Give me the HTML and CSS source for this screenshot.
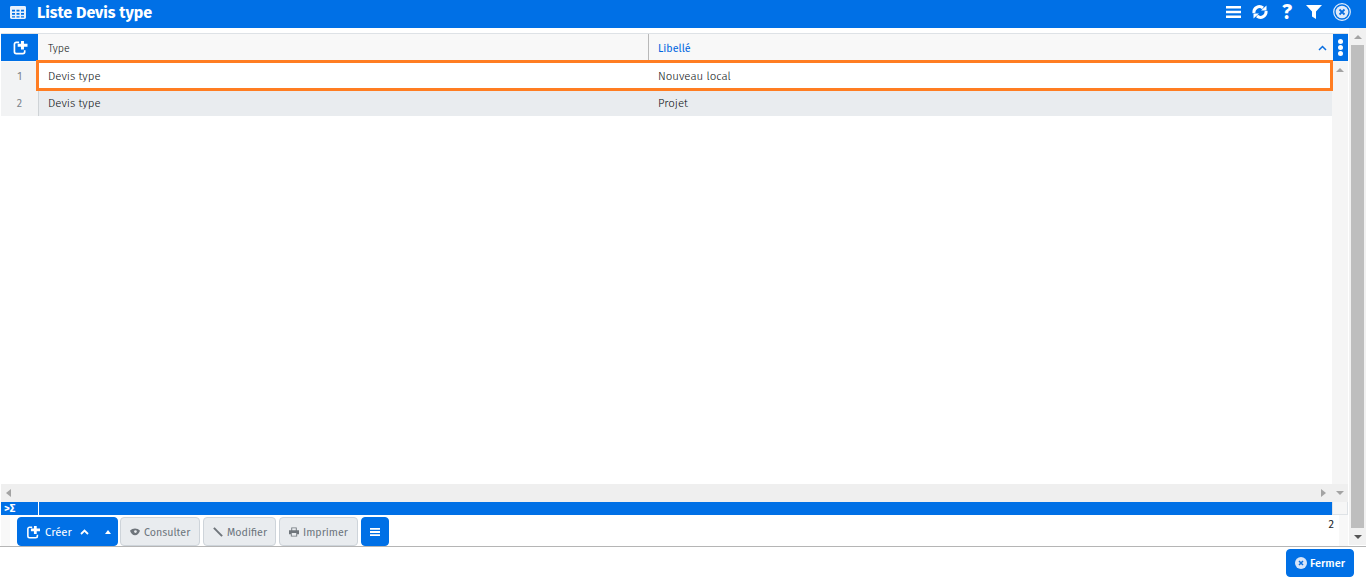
FILE: index.html
```html
<!DOCTYPE html>
<html lang="fr">
<head>
<meta charset="utf-8">
<title>Liste Devis type</title>
<link rel="stylesheet" href="styles.css">
</head>
<body>
<div class="app">
  <header class="topbar">
    <svg class="ico-table" width="16" height="13" viewBox="0 0 16 14" preserveAspectRatio="none"><path fill="#e6f0fc" fill-rule="evenodd" d="M1.500 0h13A1.500 1.500 0 0 1 16 1.500v11a1.500 1.500 0 0 1-1.500 1.500h-13A1.500 1.500 0 0 1 0 12.500v-11A1.500 1.500 0 0 1 1.500 0zM2 4v2h3V4zm4.500 0v2h3V4zM11 4v2h3V4zM2 7.500v2h3v-2zm4.500 0v2h3v-2zm4.500 0v2h3v-2zM2 11v1.500h3V11zm4.500 0v1.500h3V11zm4.500 0v1.500h3V11z"/></svg>
    <h1 class="title">Liste Devis type</h1>
    <div class="top-icons">
      <svg width="15" height="12" viewBox="0 0 15 12"><path fill="#fff" d="M0 0h15v2.600H0zM0 4.700h15v2.600H0zM0 9.400h15V12H0z"/></svg>
      <svg width="16" height="14" viewBox="0 0 16 14"><path fill="none" stroke="#fff" stroke-width="3" d="M2 8a5.500 5.500 0 0 1 9-5M14 6a5.500 5.500 0 0 1-9 5"/><path fill="#fff" d="M9 5.500 14.500 0.500V5.500zM7 8.500 1.500 13.500V8.500z"/></svg>
      <span class="help">?</span>
      <svg width="16" height="14" viewBox="0 0 16 14"><path fill="#fff" d="M0 0h16L10 6.500V14L6 11.500V6.500z"/></svg>
      <svg width="18" height="18" viewBox="0 0 18 18"><circle cx="9" cy="9" r="8.300" fill="none" stroke="#e3eefb" stroke-width="1.200"/><circle cx="9" cy="9" r="6.300" fill="#dfeafa"/><path stroke="#0b6fe0" stroke-width="1.800" d="M6.500 6.500l5 5M11.500 6.500l-5 5"/></svg>
    </div>
  </header>
  <main class="content">
    <div class="panel">
      <div class="grid">
        <div class="grid-head">
          <div class="add-cell">
            <svg width="15" height="14" viewBox="0 0 15 15"><path fill="none" stroke="#fff" stroke-width="1.800" d="M6 1.500H3A2 2 0 0 0 1 3.500v8a2 2 0 0 0 2 2h7a2 2 0 0 0 2-2V10"/><path fill="#fff" d="M8 0h3.200v3H15v3.200h-3.800v3H8v-3H4.500V3H8z"/></svg>
          </div>
          <div class="col col-type">Type</div>
          <div class="col col-label"><span>Libellé</span>
            <svg class="sort" width="9" height="6" viewBox="0 0 9 6"><path fill="none" stroke="#0b6fe0" stroke-width="1.500" d="M1 5l3.500-3.500L8 5"/></svg>
          </div>
          <div class="menu-cell"><i></i><i></i><i></i></div>
        </div>
        <div class="grid-body">
          <div class="rows">
            <div class="row">
              <div class="num">1</div>
              <div class="row-sel"><div class="c c-type">Devis type</div><div class="c">Nouveau local</div></div>
            </div>
            <div class="row row-alt">
              <div class="num">2</div>
              <div class="c c-type">Devis type</div><div class="c">Projet</div>
            </div>
          </div>
          <div class="vbar inner"><b class="up"></b></div>
        </div>
        <div class="hbar">
          <b class="left"></b>
          <span class="spacer"></span>
          <b class="right"></b>
          <b class="down"></b>
        </div>
        <div class="sumbar">
          <div class="sum-ico">&gt;Σ</div>
          <div class="sum-fill"></div>
          <div class="sum-end"></div>
        </div>
      </div>
      <div class="toolbar">
        <div class="btn primary create">
          <svg width="13" height="13" viewBox="0 0 15 15"><path fill="none" stroke="#fff" stroke-width="1.800" d="M6 1.500H3A2 2 0 0 0 1 3.500v8a2 2 0 0 0 2 2h7a2 2 0 0 0 2-2V10"/><path fill="#fff" d="M8 0h3.200v3H15v3.200h-3.800v3H8v-3H4.500V3H8z"/></svg>
          <span>Créer</span>
          <svg class="chev" width="9" height="6" viewBox="0 0 9 6"><path fill="none" stroke="#fff" stroke-width="1.800" d="M1 5l3.500-3.500L8 5"/></svg>
          <b class="caret"></b>
        </div>
        <div class="btn b-view">
          <svg width="10" height="8" viewBox="0 0 11 8"><path fill="#6f757b" d="M0 2.500C3 -.5 8 -.5 11 2.500 10 5.500 8 7.500 5.500 7.500S1 5.500 0 2.500z"/><circle cx="6" cy="3.500" r="1.500" fill="#e8ebee"/></svg>
          <span>Consulter</span>
        </div>
        <div class="btn b-edit">
          <svg width="10" height="10" viewBox="0 0 11 11"><path fill="none" stroke="#6f757b" stroke-width="2.200" d="M1 1l9 9"/></svg>
          <span>Modifier</span>
        </div>
        <div class="btn b-print">
          <svg width="10" height="10" viewBox="0 0 11 10"><path fill="#6f757b" fill-rule="evenodd" d="M2.500 0h6v3H11v4.500H9V10H2V7.500H0V3h2.500zM3.500 1v2h4V1zM3 6v3h5V6z"/></svg>
          <span>Imprimer</span>
        </div>
        <div class="btn primary square">
          <svg width="10" height="8" viewBox="0 0 10 8"><path fill="#fff" d="M0 0h10v1.800H0zM0 3.100h10v1.800H0zM0 6.200h10V8H0z"/></svg>
        </div>
        <div class="count">2</div>
      </div>
    </div>
    <div class="vbar outer"><b class="up"></b><div class="thumb"></div><b class="down dark"></b></div>
  </main>
  <footer class="footer">
    <div class="btn primary close">
      <svg width="12" height="12" viewBox="0 0 12 12"><circle cx="6" cy="6" r="6" fill="#d7e5f9"/><path stroke="#0b6fe0" stroke-width="1.500" d="M4 4l4 4M8 4l-4 4"/></svg>
      <span>Fermer</span>
    </div>
  </footer>
</div>
</body>
</html>
```

FILE: styles.css
```css
* { box-sizing: border-box; }
html, body { margin: 0; padding: 0; height: 100%; background: #fff; overflow: hidden; }
body { font-family: "Fira Sans", "Noto Sans", Roboto, sans-serif; font-size: 11.500px; font-weight: 300; color: #0c0f12; }
.app { display: flex; flex-direction: column; width: 1366px; height: 580px; }

.topbar { height: 28px; flex: none; background: #0070e6; display: flex; align-items: center; color: #fff; padding: 0 15px 4px 10px; }
.ico-table { margin-right: 11px; }
.title { margin: 0; font-size: 16px; font-weight: 700; }
.top-icons { margin-left: auto; display: flex; align-items: center; gap: 11px; }
.help { font-size: 21px; font-weight: 700; line-height: 18px; width: 16px; text-align: center; }

.content { flex: none; height: 519px; display: flex; border-bottom: 1px solid #b5b5b5; }
.panel { width: 1349px; padding: 5px 1px 0; display: flex; flex-direction: column; }
.grid { height: 482px; flex: none; display: flex; flex-direction: column; border-top: 1px solid #dee2e6; }
.grid-head { height: 28px; flex: none; display: flex; background: #f8f8f8; }
.add-cell { width: 37px; height: 27px; padding-left: 1px; background: #0070e6; display: flex; align-items: center; justify-content: center; }
.col { display: flex; align-items: center; padding: 1px 9px 0 10px; border-right: 1px solid #b9b9b9; font-size: 10.700px; }
.col-type { width: 611px; color: #0c0f12; }
.col-label { flex: 1; border-right: 0; color: #0066e0; font-weight: 400; justify-content: space-between; padding: 1px 6px 0 9px; }
.sort { margin-bottom: 2px; }
.menu-cell { width: 15px; height: 27px; background: #0070e6; display: flex; flex-direction: column; align-items: center; justify-content: center; gap: 1px; }
.menu-cell i { width: 5px; height: 5px; background: #fff; border-radius: 50%; }

.grid-body { flex: 1; display: flex; min-height: 0; }
.rows { flex: 1; min-width: 0; }
.row { display: flex; align-items: stretch; height: 29px; }
.row-alt { height: 25px; padding-bottom: 1px; background: #e9ecef; }
.num { width: 38px; flex: none; background: #f2f3f4; color: #7d858c; display: flex; align-items: center; justify-content: center; border-right: 1px solid #cfd3d6; font-size: 10.700px; font-weight: 400; }
.row-alt .num { margin-bottom: -1px; }
.row-sel { flex: 1; display: flex; height: 31px; margin: -2px -1px 0 -3px; border: 3px solid #ff7d22; position: relative; background: #fff; }
.c { display: flex; align-items: center; padding-left: 9px; }
.c-type { width: 610px; flex: none; }

.vbar { flex: none; display: flex; flex-direction: column; align-items: center; }
.vbar.inner { width: 16px; padding-top: 6px; background: #f5f5f5; }
.vbar.outer { width: 17px; height: 517px; padding: 7px 2px 6px 2px; background: #f1f1f1; }
.vbar .thumb { width: 13px; flex: 1; background: #bebebe; margin: 6px 0 7px; }
b.up, b.down, b.left, b.right, b.caret { display: block; width: 0; height: 0; border-style: solid; border-color: transparent; flex: none; }
b.up { border-width: 0 4px 4px; border-bottom-color: #a3a3a3; }
b.down { border-width: 4px 4px 0; border-top-color: #a3a3a3; }
b.down.dark { border-top-color: #555; }
b.left { border-width: 4px 5px 4px 0; border-right-color: #a3a3a3; }
b.right { border-width: 4px 0 4px 5px; border-left-color: #a3a3a3; }

.hbar { height: 18px; flex: none; display: flex; align-items: center; background: #efefef; padding: 0 4px 0 5px; }
.hbar .spacer { flex: 1; }
.hbar .right { margin-right: 10px; }
.sumbar { height: 13px; flex: none; display: flex; }
.sum-ico { width: 38px; background: #0070e6; color: #fff; font-size: 11px; font-weight: 700; line-height: 13px; padding-left: 3px; border-right: 1px solid #fff; }
.sum-fill { flex: 1; background: #0070e6; }
.sum-end { width: 16px; background: #f6f6f6; border: 1px solid #dee2e6; border-top: 0; }

.toolbar { flex: 1; display: flex; align-items: flex-start; gap: 3px; padding: 2px 0 0 7px; position: relative; background: #fff; border-left: 9px solid #f8f8f8; border-right: 9px solid #f8f8f8; }
.btn { height: 29px; padding: 1px 0 0 9px; display: flex; align-items: center; gap: 4px; flex: none; border-radius: 4px; background: #e9ecef; border: 1px solid #ced4da; color: #6c757d; font-size: 10.700px; font-weight: 400; white-space: nowrap; }
.btn.primary { background: #0070e6; border-color: #0070e6; color: #fff; }
.b-view { width: 80px; }
.b-edit { width: 73px; }
.b-print { width: 79px; }
.create { width: 101px; margin-right: -1px; gap: 5px; font-size: 11.300px; }
.create .chev { margin-left: 3px; }
b.caret { border-width: 0 3.500px 4px; border-bottom-color: #fff; margin-left: 11px; }
.square { width: 28px; padding: 0; justify-content: center; }
.count { position: absolute; right: 5px; top: 3px; font-size: 11px; font-weight: 400; color: #212529; }

.footer { flex: 1; display: flex; justify-content: flex-end; align-items: flex-start; padding: 2px 12px 0 0; }
.close { width: 68px; height: 28px; padding: 0 0 0 8px; font-size: 11px; font-weight: 500; gap: 3px; }
```
